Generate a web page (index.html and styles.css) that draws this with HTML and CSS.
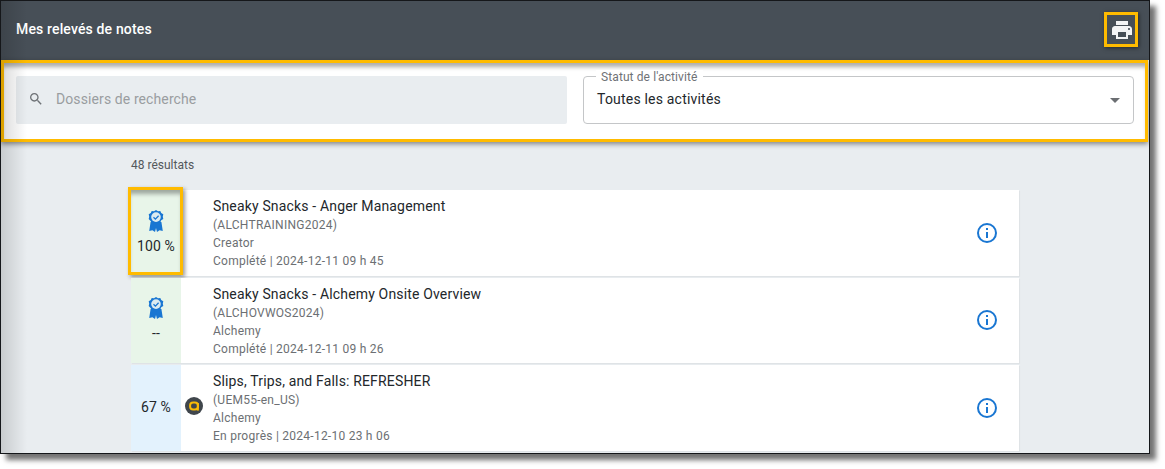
FILE: index.html
```html
<!DOCTYPE html>
<html lang="fr">
<head>
<meta charset="utf-8">
<title>Mes relevés de notes</title>
<link rel="stylesheet" href="styles.css">
</head>
<body>
<div class="frame">
  <header class="topbar">
    <h1 class="title">Mes relevés de notes</h1>
    <button class="print" aria-label="Imprimer">
      <svg width="24" height="24" viewBox="0 0 24 24"><path fill="#f3f4f5" d="M19 8H5c-1.66 0-3 1.34-3 3v6h4v4h12v-4h4v-6c0-1.66-1.34-3-3-3zm-3 11H8v-5h8v5zm3-7c-.55 0-1-.45-1-1s.45-1 1-1 1 .45 1 1-.45 1-1 1zm-1-9H6v4h12V3z"/></svg>
    </button>
  </header>
  <section class="filters">
    <div class="search">
      <svg class="search-icon" width="16" height="16" viewBox="0 0 24 24"><path fill="#6e7276" d="M15.5 14h-.79l-.28-.27C15.41 12.59 16 11.11 16 9.5 16 5.91 13.09 3 9.5 3S3 5.91 3 9.5 5.91 16 9.5 16c1.61 0 3.09-.59 4.23-1.57l.27.28v.79l5 4.99L20.49 19l-4.99-5zm-6 0C7.01 14 5 11.99 5 9.5S7.01 5 9.5 5 14 7.01 14 9.5 11.99 14 9.5 14z"/></svg>
      <span class="placeholder">Dossiers de recherche</span>
    </div>
    <div class="select">
      <span class="select-label">Statut de l'activité</span>
      <span class="select-value">Toutes les activités</span>
      <span class="caret"></span>
    </div>
  </section>
  <main class="content">
    <p class="count">48 résultats</p>
    <div class="list">
      <article class="row">
        <div class="score done callout-score">
          <svg class="award" width="16" height="22" viewBox="0 0 16 22"><use href="#ribbon"/></svg>
          <span>100 %</span>
        </div>
        <div class="badge-slot"></div>
        <div class="info">
          <div class="name">Sneaky Snacks - Anger Management</div>
          <div class="meta">(ALCHTRAINING2024)</div>
          <div class="meta">Creator</div>
          <div class="meta">Complété | 2024-12-11 09 h 45</div>
        </div>
        <svg class="info-icon" width="24" height="24" viewBox="0 0 24 24"><use href="#info"/></svg>
      </article>
      <article class="row">
        <div class="score done">
          <svg class="award" width="16" height="22" viewBox="0 0 16 22"><use href="#ribbon"/></svg>
          <span>--</span>
        </div>
        <div class="badge-slot"></div>
        <div class="info">
          <div class="name">Sneaky Snacks - Alchemy Onsite Overview</div>
          <div class="meta">(ALCHOVWOS2024)</div>
          <div class="meta">Alchemy</div>
          <div class="meta">Complété | 2024-12-11 09 h 26</div>
        </div>
        <svg class="info-icon" width="24" height="24" viewBox="0 0 24 24"><use href="#info"/></svg>
      </article>
      <article class="row">
        <div class="score progress"><span>67 %</span></div>
        <div class="badge-slot">
          <svg class="logo" width="18" height="18" viewBox="0 0 18 18"><circle cx="9" cy="9" r="9" fill="#40464c"/><rect x="5.1" y="5.4" width="7.8" height="7.2" rx="3" fill="none" stroke="#fbbc05" stroke-width="2"/><path d="M12.9 6V13.6" stroke="#fbbc05" stroke-width="2"/></svg>
        </div>
        <div class="info">
          <div class="name">Slips, Trips, and Falls: REFRESHER</div>
          <div class="meta">(UEM55-en_US)</div>
          <div class="meta">Alchemy</div>
          <div class="meta">En progrès | 2024-12-10 23 h 06</div>
        </div>
        <svg class="info-icon" width="24" height="24" viewBox="0 0 24 24"><use href="#info"/></svg>
      </article>
    </div>
  </main>
</div>
<svg class="defs" width="0" height="0">
  <defs>
    <g id="ribbon">
      <path fill="#1976d2" d="M2.6 12 1.2 21l3.2-.8L7 22l1-4 1 4 2.6-1.8 3.2.8L13.4 12z"/>
      <path fill="#1976d2" d="M8 0l2 1.2 2.3-.2.9 2.1 2.1 1.2-.5 2.4.5 2.4-2.1 1.2-.9 2.1-2.3-.2L8 14.4l-2-1.2-2.3.2-.9-2.1L.7 9.1l.5-2.4-.5-2.4 2.1-1.2.9-2.1 2.3.2z"/>
      <circle cx="8" cy="7.1" r="4.8" fill="#dcebf0"/>
      <path d="M5.5 7.2l1.9 1.9 3.2-3.4" fill="none" stroke="#1976d2" stroke-width="1.3"/>
    </g>
    <g id="info">
      <circle cx="12" cy="12" r="9" fill="none" stroke="#1976d2" stroke-width="2"/>
      <path fill="#1976d2" d="M11 11h2v6h-2zM11 7h2v2h-2z"/>
    </g>
  </defs>
</svg>
</body>
</html>
```

FILE: styles.css
```css
* {
  box-sizing: border-box;
}

html,
body {
  margin: 0;
  padding: 0;
  background: #fff;
}

body {
  width: 1165px;
  height: 469px;
  overflow: hidden;
  font-family: Roboto, "Liberation Sans", sans-serif;
}

.frame {
  position: relative;
  width: 1150px;
  height: 454px;
  border: 1px solid #15171a;
  background: #e9edf0;
  box-shadow: 6px 6px 5px rgba(0, 0, 0, 0.55);
  overflow: hidden;
}

.frame::after {
  content: "";
  position: absolute;
  inset: 0;
  z-index: 3;
  pointer-events: none;
  background: linear-gradient(90deg, rgba(0, 0, 0, 0.14), rgba(0, 0, 0, 0) 26px);
}

.topbar {
  position: relative;
  z-index: 2;
  display: flex;
  align-items: center;
  justify-content: space-between;
  height: 59px;
  padding: 0 14px 2px 15px;
  background: #474f57;
}

.title {
  margin: 0 0 1px;
  font-size: 14px;
  font-weight: 500;
  letter-spacing: 0.15px;
  color: #fff;
}

.print {
  display: flex;
  align-items: center;
  justify-content: center;
  width: 34px;
  height: 35px;
  padding: 0 0 0 2px;
  margin-right: -3px;
  background: transparent;
  border: 3px solid #ffbb00;
  box-shadow: 1px 1px 4px rgba(0, 0, 0, 0.5);
}

.filters {
  position: relative;
  z-index: 2;
  display: flex;
  gap: 16px;
  height: 82px;
  margin-right: 1px;
  padding: 13px 12px 14px 12px;
  background: #fff;
  border: 3px solid #ffbb00;
  box-shadow: 0 2px 5px rgba(0, 0, 0, 0.45), inset 0 6px 4px -2px rgba(0, 0, 0, 0.32);
}

.search {
  display: flex;
  align-items: center;
  flex: none;
  width: 551px;
  height: 48px;
  padding-bottom: 2px;
  background: #e9edf0;
  border-radius: 2px;
}

.search-icon {
  margin-left: 12px;
}

.placeholder {
  margin-left: 12px;
  font-size: 14px;
  letter-spacing: 0.1px;
  color: #9a9da0;
}

.select {
  position: relative;
  display: flex;
  align-items: center;
  flex: none;
  width: 551px;
  height: 48px;
  padding: 0 13px 2px;
  border: 1px solid #c4c6c8;
  border-radius: 4px;
}

.select-label {
  position: absolute;
  top: -7px;
  left: 12px;
  padding: 0 5px;
  font-size: 12px;
  line-height: 14px;
  letter-spacing: 0.1px;
  color: #6f7276;
  background: #fff;
}

.select-value {
  font-size: 14px;
  letter-spacing: 0.2px;
  color: #23272b;
}

.caret {
  position: absolute;
  top: 21px;
  right: 13px;
  border-left: 5px solid transparent;
  border-right: 5px solid transparent;
  border-top: 5px solid #6b6e72;
}

.content {
  padding: 0 130px;
}

.count {
  margin: 0;
  padding-top: 15px;
  height: 48px;
  font-size: 12px;
  line-height: 16px;
  color: #54585c;
}

.list {
  width: 888px;
}

.row {
  position: relative;
  display: flex;
  align-items: center;
  height: 85.5px;
  margin-bottom: 2px;
  background: #fff;
  box-shadow: 1px 1px 1px rgba(0, 0, 0, 0.04);
}

.score {
  display: flex;
  flex-direction: column;
  align-items: center;
  justify-content: center;
  flex: none;
  width: 50px;
  height: 100%;
  padding-bottom: 2px;
  font-size: 14px;
  letter-spacing: 0.1px;
  color: #23272b;
}

.done {
  background: #e8f5e9;
}

.progress {
  background: #e3f2fd;
}

.award {
  margin-bottom: 6px;
}

.callout-score::after {
  content: "";
  position: absolute;
  box-sizing: border-box;
  left: -3px;
  top: -3px;
  width: 55px;
  height: 88px;
  border: 3px solid #ffbb00;
  box-shadow: 2px 2px 4px rgba(0, 0, 0, 0.4), inset 0 6px 4px -2px rgba(0, 0, 0, 0.32);
}

.badge-slot {
  display: flex;
  align-items: center;
  justify-content: center;
  flex: none;
  width: 26px;
}

.logo {
  margin-bottom: 4px;
}

.info {
  flex: 1;
  padding: 2px 0 0 6px;
}

.name {
  font-size: 14px;
  line-height: 19px;
  letter-spacing: 0.16px;
  color: #23272b;
}

.meta {
  font-size: 12px;
  line-height: 18px;
  letter-spacing: 0.25px;
  color: #6c6f73;
}

.info-icon {
  flex: none;
  margin-right: 20px;
}

.defs {
  position: absolute;
}
```
